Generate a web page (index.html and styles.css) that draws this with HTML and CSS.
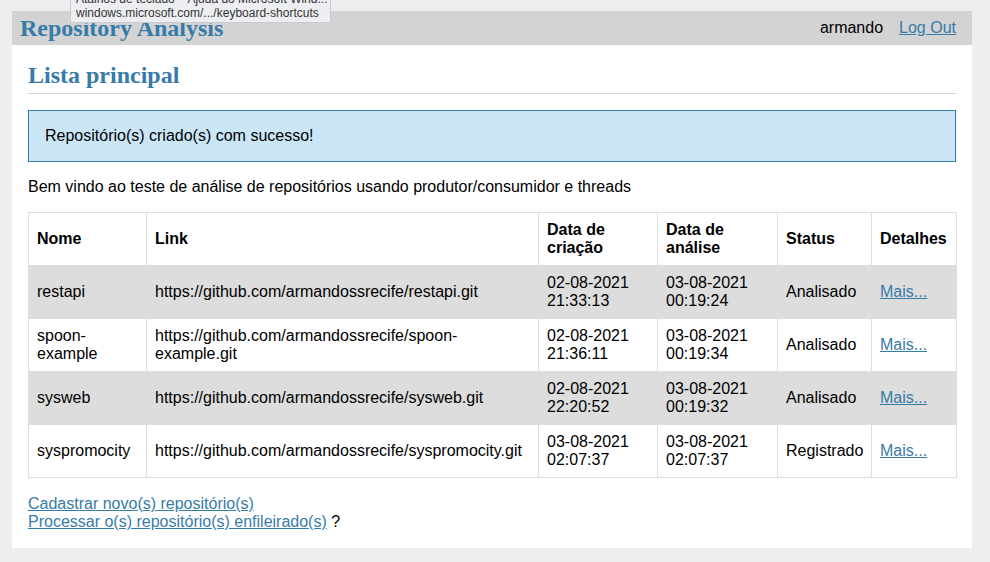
FILE: index.html
```html
<!DOCTYPE html>
<html lang="pt">
<head>
<meta charset="utf-8">
<title>Repository Analysis</title>
<link rel="stylesheet" href="styles.css">
</head>
<body>
<nav class="topnav">
  <h1 class="brand"><a href="#">Repository Analysis</a></h1>
  <ul class="navlinks">
    <li><span>armando</span></li>
    <li><a href="#">Log Out</a></li>
  </ul>
</nav>
<section class="content">
  <header class="page-header">
    <h1>Lista principal</h1>
  </header>
  <div class="flash">Repositório(s) criado(s) com sucesso!</div>
  <p class="intro">Bem vindo ao teste de análise de repositórios usando produtor/consumidor e threads</p>
  <table class="repos">
    <colgroup>
      <col class="c-nome"><col class="c-link"><col class="c-data"><col class="c-data2"><col class="c-status"><col class="c-det">
    </colgroup>
    <thead>
      <tr><th>Nome</th><th>Link</th><th>Data de criação</th><th>Data de análise</th><th>Status</th><th>Detalhes</th></tr>
    </thead>
    <tbody>
      <tr class="alt"><td>restapi</td><td>https://github.com/armandossrecife/restapi.git</td><td>02-08-2021<br>21:33:13</td><td>03-08-2021<br>00:19:24</td><td>Analisado</td><td><a href="#">Mais...</a></td></tr>
      <tr><td>spoon-<br>example</td><td>https://github.com/armandossrecife/spoon-<br>example.git</td><td>02-08-2021<br>21:36:11</td><td>03-08-2021<br>00:19:34</td><td>Analisado</td><td><a href="#">Mais...</a></td></tr>
      <tr class="alt"><td>sysweb</td><td>https://github.com/armandossrecife/sysweb.git</td><td>02-08-2021<br>22:20:52</td><td>03-08-2021<br>00:19:32</td><td>Analisado</td><td><a href="#">Mais...</a></td></tr>
      <tr><td>syspromocity</td><td>https://github.com/armandossrecife/syspromocity.git</td><td>03-08-2021<br>02:07:37</td><td>03-08-2021<br>02:07:37</td><td>Registrado</td><td><a href="#">Mais...</a></td></tr>
    </tbody>
  </table>
  <div class="actions">
    <a href="#">Cadastrar novo(s) repositório(s)</a><br>
    <a href="#">Processar o(s) repositório(s) enfileirado(s)</a> ?
  </div>
</section>
<div class="tooltip">
  <div>Atalhos de teclado – Ajuda do Microsoft Wind...</div>
  <div>windows.microsoft.com/.../keyboard-shortcuts</div>
</div>
</body>
</html>
```
FILE: styles.css
```css
html {
  background: #eeeeee;
  font-family: "Liberation Sans", Arial, sans-serif;
  font-size: 16px;
}
body {
  margin: 11px 0 0 12px;
  width: 960px;
  background: #ffffff;
  color: #000;
}
a { color: #377ba8; }

.topnav {
  background: #d3d3d3;
  display: flex;
  align-items: center;
  padding: 0 8px;
  height: 34px;
}
.brand {
  flex: auto;
  margin: 0;
  font-family: "Liberation Serif", "Times New Roman", serif;
  font-size: 24px;
  line-height: 27px;
}
.brand a {
  text-decoration: none;
  color: #377ba8;
}
.navlinks {
  display: flex;
  list-style: none;
  margin: 0;
  padding: 0;
}
.navlinks span, .navlinks a {
  display: block;
  padding: 8px;
  line-height: 18px;
}

.content {
  padding: 0 16px 17px;
}
.page-header {
  border-bottom: 1px solid #d3d3d3;
  display: flex;
  align-items: flex-end;
}
.page-header h1 {
  flex: auto;
  margin: 16px 0 4px 0;
  font-family: "Liberation Serif", "Times New Roman", serif;
  font-size: 24px;
  line-height: 28px;
  color: #377ba8;
}
.flash {
  margin: 16px 0;
  padding: 16px;
  background: #cae6f6;
  border: 1px solid #377ba8;
}
.intro {
  margin: 16px 0;
}
.repos {
  width: 100%;
  border-collapse: collapse;
  table-layout: fixed;
}
.c-nome { width: 118px; }
.c-link { width: 392px; }
.c-data { width: 119px; }
.c-data2 { width: 120px; }
.c-status { width: 94px; }
.c-det { width: 85px; }
.repos th, .repos td {
  border: 1px solid #dddddd;
  padding: 8px;
  text-align: left;
  vertical-align: middle;
  line-height: 18px;
}
.repos th { font-weight: bold; }
.repos tr.alt { background: #dddddd; }
.actions {
  margin-top: 17px;
  line-height: 18px;
}

.tooltip {
  position: absolute;
  left: 70px;
  top: -9px;
  width: 250px;
  padding: 0 4px 2px 5px;
  background: #eceef1;
  border: 1px solid #c9cbce;
  font-family: "Liberation Sans", Arial, sans-serif;
  font-size: 12px;
  line-height: 14px;
  color: #333;
  white-space: nowrap;
  overflow: hidden;
}
```
